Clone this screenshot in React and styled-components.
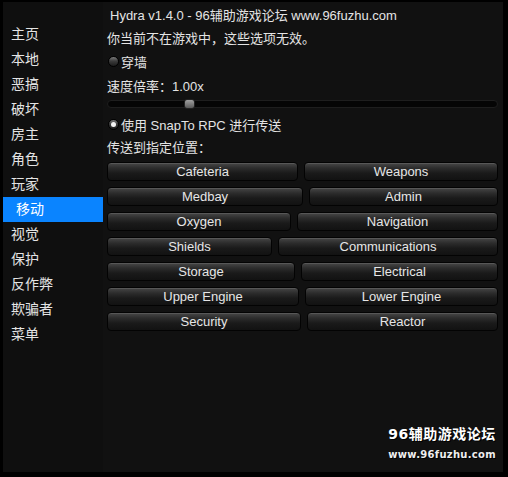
import React from "react";
import styled, { createGlobalStyle } from "styled-components";

const GlobalStyle = createGlobalStyle`
  html, body {
    margin: 0;
    padding: 0;
    background: #000;
  }
  body {
    font-family: "Liberation Sans", "Noto Sans CJK SC", sans-serif;
    color: #e4e4e4;
  }
`;

const Frame = styled.div`
  width: 508px;
  height: 477px;
  box-sizing: border-box;
  padding: 2px 5px 5px 3px;
  background: #000;
`;

const Panel = styled.div`
  position: relative;
  display: flex;
  height: 100%;
  background: #111111;
`;

const Sidebar = styled.nav`
  width: 100px;
  flex-shrink: 0;
  padding-top: 20px;
  background: #0f0f0f;
`;

const NavItem = styled.div`
  height: 25px;
  line-height: 25px;
  font-size: 14px;
  padding-left: ${(p) => (p.$active ? "13px" : "8px")};
  background: ${(p) => (p.$active ? "#0a84ff" : "transparent")};
  color: ${(p) => (p.$active ? "#fff" : "#e4e4e4")};
`;

const Content = styled.main`
  flex: 1;
  display: flex;
  flex-direction: column;
  padding: 0 5px 0 4px;
`;

const Line = styled.div`
  height: ${(p) => p.$h}px;
  display: flex;
  align-items: center;
  font-size: 13px;
  padding-left: ${(p) => p.$indent || 0}px;
  white-space: nowrap;
`;

const Toggle = styled.span`
  flex-shrink: 0;
  width: 11px;
  height: 11px;
  border-radius: 50%;
  margin: 0 2px 0 1px;
  box-sizing: border-box;
  background: linear-gradient(#7a7a7a 0%, #3c3c3c 45%, #1c1c1c 100%);
  border: 1px solid #000;
  display: flex;
  align-items: center;
  justify-content: center;

  &::after {
    content: "";
    width: 5px;
    height: 5px;
    border-radius: 50%;
    background: ${(p) => (p.$on ? "#f4f4f4" : "transparent")};
  }
`;

const Track = styled.div`
  position: relative;
  width: 100%;
  height: 8px;
  border-radius: 4px;
  background: #050505;
  border: 1px solid #1e1e1e;
  box-sizing: border-box;
`;

const Thumb = styled.div`
  position: absolute;
  top: -2px;
  width: 11px;
  height: 10px;
  border-radius: 3px;
  background: linear-gradient(#a0a0a0, #5a5a5a);
  border: 1px solid #222;
  box-sizing: border-box;
`;

const Grid = styled.div`
  display: flex;
  flex-direction: column;
  gap: 6px;
  margin-top: 6px;
`;

const Row = styled.div`
  display: grid;
  grid-template-columns: ${(p) => p.$left}px 1fr;
  gap: 6px;
`;

const Btn = styled.button`
  height: 19px;
  padding: 0;
  border: 1px solid #030303;
  border-radius: 4px;
  background: linear-gradient(#474747 0%, #2c2c2c 30%, #1a1a1a 60%, #121212 100%);
  box-shadow: inset 0 1px 0 rgba(255, 255, 255, 0.1);
  color: #e6e6e6;
  font-family: "Liberation Sans", "Noto Sans CJK SC", sans-serif;
  font-size: 13px;
  line-height: 17px;
  text-align: center;
`;

const Watermark = styled.div`
  position: absolute;
  right: 7px;
  bottom: 12px;
  display: flex;
  flex-direction: column;
  align-items: center;
  color: #fff;
  font-family: "DejaVu Sans", "Noto Sans CJK SC", sans-serif;
  font-weight: bold;
  text-shadow: 1px 1px 0 #000;
`;

const MarkTitle = styled.div`
  font-size: 14px;
  letter-spacing: 0.5px;
`;

const MarkUrl = styled.div`
  font-size: 10px;
  margin-top: 6px;
  letter-spacing: 0.3px;
  color: #eee;
`;

const menu = ["主页", "本地", "恶搞", "破坏", "房主", "角色", "玩家", "移动", "视觉", "保护", "反作弊", "欺骗者", "菜单"];

const rooms = [
  ["Cafeteria", "Weapons", 191],
  ["Medbay", "Admin", 196],
  ["Oxygen", "Navigation", 184],
  ["Shields", "Communications", 165],
  ["Storage", "Electrical", 188],
  ["Upper Engine", "Lower Engine", 192],
  ["Security", "Reactor", 194],
];

export default function App() {
  return (
    <Frame>
      <GlobalStyle />
      <Panel>
        <Sidebar>
          {menu.map((m) => (
            <NavItem key={m} $active={m === "移动"}>
              {m}
            </NavItem>
          ))}
        </Sidebar>
        <Content>
          <Line $h={24} $indent={3}>
            Hydra v1.4.0 - 96辅助游戏论坛 www.96fuzhu.com
          </Line>
          <Line $h={22}>你当前不在游戏中，这些选项无效。</Line>
          <Line $h={26}>
            <Toggle />
            穿墙
          </Line>
          <Line $h={22}>速度倍率：1.00x</Line>
          <Line $h={16}>
            <Track>
              <Thumb style={{ left: "76px" }} />
            </Track>
          </Line>
          <Line $h={24}>
            <Toggle $on />
            使用 SnapTo RPC 进行传送
          </Line>
          <Line $h={20}>传送到指定位置：</Line>
          <Grid>
            {rooms.map(([a, b, w]) => (
              <Row key={a} $left={w}>
                <Btn>{a}</Btn>
                <Btn>{b}</Btn>
              </Row>
            ))}
          </Grid>
        </Content>
        <Watermark>
          <MarkTitle>96辅助游戏论坛</MarkTitle>
          <MarkUrl>www.96fuzhu.com</MarkUrl>
        </Watermark>
      </Panel>
    </Frame>
  );
}
